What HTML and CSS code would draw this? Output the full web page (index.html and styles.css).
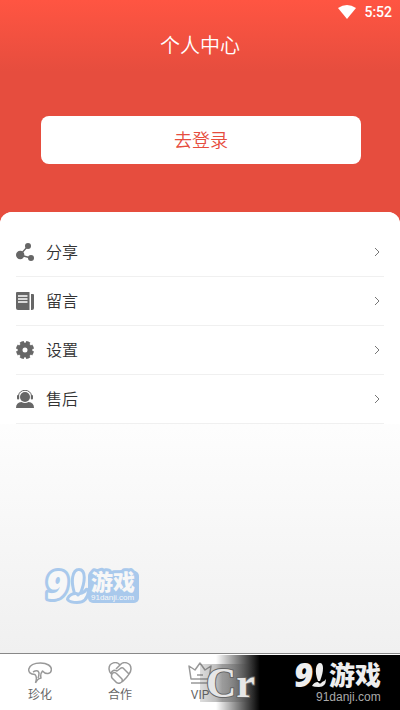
FILE: index.html
```html
<!DOCTYPE html>
<html lang="zh-CN">
  <head>
    <meta charset="utf-8">
    <meta name="viewport" content="width=device-width, initial-scale=1">
    <title>个人中心</title>
    <link rel="stylesheet" href="styles.css">
  </head>
  <body>
    <header>
      <div class="status">
        <svg width="18" height="14" viewBox="0 0 18 14"><path d="M0 3Q9-3 18 3L9 14Z" fill="#fff"/></svg>
        <span>5:52</span>
      </div>
      <h1>个人中心</h1>
      <button type="button" class="login">去登录</button>
    </header>

    <main>
      <nav class="menu">
        <a href="#">
          <svg class="icon" viewBox="0 0 18 18">
            <path d="M4 12L12 3M4 12L15 15" fill="none" stroke="#666" stroke-width="1.3"/>
            <circle cx="4.2" cy="12" r="4.2"/><circle cx="12" cy="3" r="3"/><circle cx="15" cy="15" r="3"/>
          </svg>
          <span>分享</span>
          <svg class="arrow" viewBox="0 0 6 10"><path d="M1 1L5 5L1 9"/></svg>
        </a>
        <a href="#">
          <svg class="icon" viewBox="0 0 18 18">
            <path d="M1 0H13.5V18H2Q0 18 0 16V1Q0 0 1 0Z"/>
            <path d="M15 2H17Q18 2 18 3V16Q18 18 16 18H15Z"/>
            <path d="M2 4H11.5M2 7H11.5M2 10H11.5" stroke="#fff" stroke-width="1.3"/>
          </svg>
          <span>留言</span>
          <svg class="arrow" viewBox="0 0 6 10"><path d="M1 1L5 5L1 9"/></svg>
        </a>
        <a href="#">
          <svg class="icon" viewBox="0 0 18 18">
            <circle cx="9" cy="9" r="5" fill="none" stroke="#666" stroke-width="5"/>
            <circle cx="9" cy="9" r="8" fill="none" stroke="#666" stroke-width="2" pathLength="16" stroke-dasharray="1.3 0.7" stroke-dashoffset="-0.35"/>
          </svg>
          <span>设置</span>
          <svg class="arrow" viewBox="0 0 6 10"><path d="M1 1L5 5L1 9"/></svg>
        </a>
        <a href="#">
          <svg class="icon" viewBox="0 0 18 18">
            <path d="M2.5 6A6.5 5.7 0 0 1 15.5 6" fill="none" stroke="#666" stroke-width="1"/>
            <rect x="1" y="5" width="2.2" height="4.5" rx="1"/><rect x="14.8" y="5" width="2.2" height="4.5" rx="1"/>
            <circle cx="9" cy="7" r="5"/>
            <path d="M0 18Q0 12.5 5.5 12Q9 14 12.5 12Q18 12.5 18 18Z"/>
          </svg>
          <span>售后</span>
          <svg class="arrow" viewBox="0 0 6 10"><path d="M1 1L5 5L1 9"/></svg>
        </a>
      </nav>
      <svg class="stamp" viewBox="0 0 96 38">
        <rect class="plate" x="44" y="4" width="51" height="32" rx="5"/>
        <text class="num" x="2" y="32" font-size="38">9</text>
        <path d="M35 4C40 4 40 14 35 26H32C28 14 30 4 35 4Z"/>
        <path d="M25 32Q27 28 32 28Q34 31 36 28Q41 27 43 24Q42 34 33 34Q27 34 25 32Z"/>
        <text class="name" x="47" y="23">游戏</text>
        <text class="site" x="47" y="33">91danji.com</text>
      </svg>
    </main>

    <footer>
      <nav class="tabs">
        <a href="#">
          <svg viewBox="0 0 24 22"><path d="M7.5 21Q9.5 15 7 12.5Q0 12 .8 7C2 3 7 1 12.5 1C19 1 24 4 23.3 8C23 12 18 13 14.5 9Q12 12 13 16Q9 17 7.5 21M5 10Q10 7 11 11Q11 14 10 16"/></svg>
          <span>珍化</span>
        </a>
        <a href="#">
          <svg viewBox="0 0 24 22"><path d="M12 3C9-1 1 0 1 7C1 10 3 12 4 13M12 3C15-1 23 0 23 7C23 12 17 17 14 20M3 11Q5 7 9 9L13 6Q15 5 16 7L21 12M12 3L8 7M4 12Q6 9 9 12L14 17Q15 20 12 21Q9 22 7 19L4 16Q3 14 4 12"/></svg>
          <span>合作</span>
        </a>
        <a href="#">
          <svg viewBox="0 0 24 22"><path d="M3 17L1 4L7 8L12 1L17 8L23 4L21 17ZM3 21H21M9 13H15"/></svg>
          <span>VIP</span>
        </a>
      </nav>
      <div class="brand">
        <svg class="cr" viewBox="0 0 56 38"><text x="6" y="33">Cr</text></svg>
        <svg class="logo" viewBox="0 0 88 42">
          <text class="num" x="0" y="25" font-size="33">9</text>
          <path d="M26 1C30 1 30 9 26 19H24C20 9 22 1 26 1Z"/>
          <path d="M18 24Q20 20 24 20Q26 23 28 20Q31 19 32 17Q32 25 25 25Q20 25 18 24Z"/>
          <text class="name" x="35" y="23">游戏</text>
          <text class="site" x="22" y="39">91danji.com</text>
        </svg>
      </div>
    </footer>
  </body>
</html>
```
FILE: styles.css
```css
* {
  box-sizing: border-box;
}

body {
  display: flex;
  flex-direction: column;
  min-height: 100vh;
  margin: 0;
  background-color: #e64d3e;
  color: #333;
  font-family: Roboto, "Noto Sans CJK SC", sans-serif;
}

header {
  display: flex;
  flex-direction: column;
  padding-bottom: 48px;
  background: linear-gradient(#ff5542, #e64d3e 72px);
}

.status {
  display: flex;
  justify-content: flex-end;
  align-items: center;
  gap: 8px;
  height: 24px;
  padding: 0 8px;
  color: #fff;
  font-size: 14px;
  font-weight: 500;
}

h1 {
  margin: 0;
  color: #fff;
  font-size: 20px;
  font-weight: 350;
  line-height: 44px;
  text-align: center;
}

.login {
  height: 48px;
  margin: 48px 39px 0 41px;
  padding-bottom: 4px;
  border: none;
  border-radius: 8px;
  background-color: #fff;
  color: #e64d3e;
  font-family: inherit;
  font-size: 18px;
  font-weight: 350;
  cursor: pointer;
}

main {
  flex: 1;
  overflow: hidden;
  border-radius: 12px 12px 0 0;
  background: linear-gradient(#fff 180px, #f0f0f0);
}

.menu {
  padding: 16px 16px 0;
  background-color: #fff;
}

.menu a {
  display: flex;
  align-items: center;
  gap: 12px;
  height: 49px;
  padding-right: 4px;
  border-bottom: 1px solid #f0f0f0;
  color: #333;
  font-size: 16px;
  font-weight: 350;
  text-decoration: none;
}

.menu span {
  flex: 1;
  padding-bottom: 2px;
}

.icon {
  width: 18px;
  height: 18px;
  fill: #666;
}

.arrow {
  width: 6px;
  height: 10px;
  fill: none;
  stroke: #777;
}

.stamp {
  display: block;
  overflow: visible;
  width: 96px;
  height: 38px;
  margin: 143px 0 0 44px;
  fill: #f7f7f7;
  stroke: #a9c9ec;
  stroke-width: 6px;
  stroke-linejoin: round;
  paint-order: stroke;
}

.stamp .plate {
  fill: #a9c9ec;
  stroke: none;
}

.stamp .site {
  stroke: none;
}

.num {
  font-family: "Open Sans", sans-serif;
  font-style: italic;
  font-weight: 800;
}

.name {
  font-family: "Noto Sans CJK SC", sans-serif;
  font-size: 22px;
  font-weight: 900;
}

.site {
  font-family: "Liberation Sans", sans-serif;
  font-size: 8px;
}

footer {
  position: relative;
  border-top: 1px solid #888;
  background-color: #fff;
}

.tabs {
  display: grid;
  grid-template-columns: repeat(5, 1fr);
  height: 56px;
}

.tabs a {
  display: flex;
  flex-direction: column;
  align-items: center;
  gap: 2px;
  padding-top: 8px;
  color: #666;
  font-size: 12px;
  line-height: 18px;
  text-decoration: none;
}

.tabs svg {
  width: 24px;
  height: 22px;
  fill: none;
  stroke: #999;
  stroke-width: 1.5px;
  stroke-linejoin: round;
}

/* banner laid over the last tabs */
.brand {
  position: absolute;
  top: 1px;
  right: 0;
  bottom: 0;
  display: flex;
  justify-content: space-between;
  align-items: center;
  width: 200px;
  padding-right: 18px;
  background: linear-gradient(90deg, transparent 16px, #000 60px);
}

.cr {
  overflow: visible;
  width: 56px;
  height: 38px;
  background: linear-gradient(90deg, rgba(90, 90, 90, 0.2), rgba(60, 60, 60, 0.4) 40%, transparent);
}

.cr text {
  fill: #e6e6e6;
  stroke: #666;
  stroke-width: 2px;
  paint-order: stroke;
  font-family: "Liberation Serif", serif;
  font-size: 42px;
  font-weight: bold;
}

.logo {
  overflow: visible;
  width: 88px;
  height: 42px;
  fill: #eee;
}

.logo .name {
  font-size: 26px;
}

.logo .site {
  fill: #aaa;
  font-size: 12px;
}
```
